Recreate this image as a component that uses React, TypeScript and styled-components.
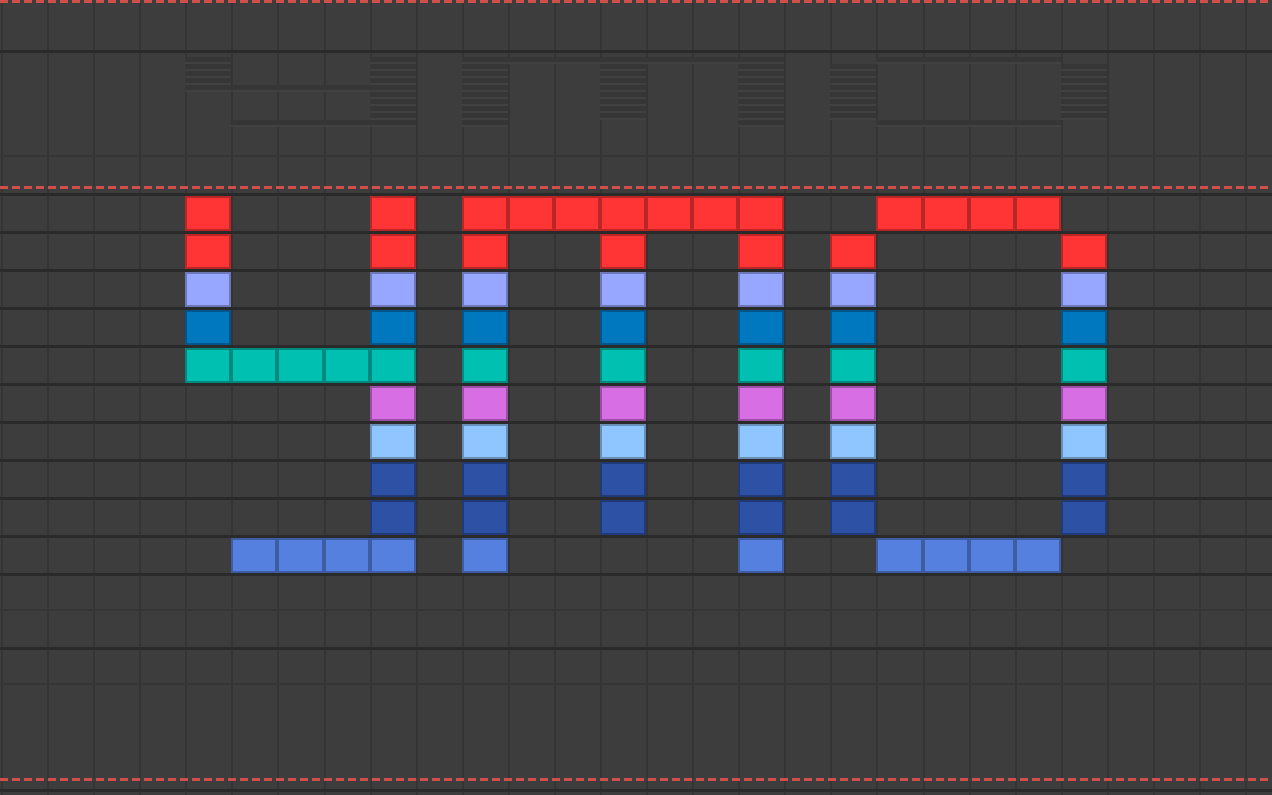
import React from 'react';
import styled, { createGlobalStyle } from 'styled-components';

const COLS = 28;
const PITCH = 46.08;

type Tone = 'red' | 'periwinkle' | 'blue' | 'teal' | 'violet' | 'sky' | 'navy' | 'royal';
type Divider = 'thick' | 'thin' | 'none';

const tones: Record<Tone, string> = {
  red: '#ff3535',
  periwinkle: '#97a7ff',
  blue: '#0078c0',
  teal: '#00c0b1',
  violet: '#d76ee3',
  sky: '#8fc6ff',
  navy: '#2c51a5',
  royal: '#5580e0',
};

const dividers: Record<Divider, string> = {
  thick: '3px solid #2a2a2a',
  thin: '2px solid #363636',
  none: 'none',
};

const stems = [8, 10, 13, 16, 18, 23];

const pattern: { tone: Tone; cols: number[] }[] = [
  { tone: 'red', cols: [4, 8, 10, 11, 12, 13, 14, 15, 16, 19, 20, 21, 22] },
  { tone: 'red', cols: [4, ...stems] },
  { tone: 'periwinkle', cols: [4, ...stems] },
  { tone: 'blue', cols: [4, ...stems] },
  { tone: 'teal', cols: [4, 5, 6, 7, ...stems] },
  { tone: 'violet', cols: stems },
  { tone: 'sky', cols: stems },
  { tone: 'navy', cols: stems },
  { tone: 'navy', cols: stems },
  { tone: 'royal', cols: [5, 6, 7, 8, 10, 16, 19, 20, 21, 22] },
];

const GlobalStyle = createGlobalStyle`
  html, body {
    margin: 0;
    padding: 0;
    background: #3d3d3d;
    overflow: hidden;
  }
  #root {
    width: 1272px;
    height: 795px;
  }
`;

const Roll = styled.div`
  width: 1272px;
  height: 795px;
  overflow: hidden;
  background: #3d3d3d;
  display: flex;
  flex-direction: column;
`;

const Lane = styled.div<{ $height: number; $divider?: Divider }>`
  flex: none;
  display: grid;
  grid-template-columns: repeat(${COLS}, ${PITCH}px);
  height: ${({ $height }) => $height}px;
  padding-left: 1px;
  border-bottom: ${({ $divider }) => dividers[$divider ?? 'none']};
`;

const Overview = styled(Lane)`
  grid-template-rows: 4px repeat(10, 7px) 1fr;
`;

const Slot = styled.div<{ $col: number }>`
  grid-column: ${({ $col }) => $col};
  grid-row: 1 / -1;
  border-left: 2px solid #343434;
`;

const Note = styled.div<{ $col: number; $tone: Tone }>`
  grid-column: ${({ $col }) => $col};
  box-sizing: border-box;
  background: ${({ $tone }) => tones[$tone]};
  border: 2px solid rgba(0, 0, 0, 0.28);
`;

const MiniNote = styled.div<{ $col: number; $row: number }>`
  grid-column: ${({ $col }) => $col};
  grid-row: ${({ $row }) => $row};
  box-sizing: border-box;
  background: #363636;
  border-bottom: 2px solid #414141;
`;

const Marker = styled.div`
  flex: none;
  height: 3px;
  background: repeating-linear-gradient(90deg, #cf504b 0 8px, transparent 8px 12px);
`;

const slots = () => Array.from({ length: COLS }, (_, c) => <Slot key={c} $col={c + 1} />);

const EmptyLane: React.FC<{ height: number; divider?: Divider }> = ({ height, divider }) => (
  <Lane $height={height} $divider={divider}>
    {slots()}
  </Lane>
);

const App: React.FC = () => (
  <>
    <GlobalStyle />
    <Roll>
      <Marker />
      <EmptyLane height={47} divider="thick" />
      <Overview $height={102} $divider="thin">
        {slots()}
        {pattern.map((row, r) =>
          row.cols.map((c) => <MiniNote key={`${r}-${c}`} $col={c + 1} $row={r + 2} />),
        )}
      </Overview>
      <EmptyLane height={29} />
      <Marker />
      <EmptyLane height={4} divider="thick" />
      {pattern.map((row, r) => (
        <Lane key={r} $height={35} $divider="thick">
          {Array.from({ length: COLS }, (_, c) =>
            row.cols.includes(c) ? (
              <Note key={c} $col={c + 1} $tone={row.tone} />
            ) : (
              <Slot key={c} $col={c + 1} />
            ),
          )}
        </Lane>
      ))}
      <EmptyLane height={33} divider="thin" />
      <EmptyLane height={36} divider="thick" />
      <EmptyLane height={33} divider="thin" />
      <EmptyLane height={93} />
      <Marker />
      <EmptyLane height={8} divider="thick" />
      <EmptyLane height={4} />
    </Roll>
  </>
);

export default App;
